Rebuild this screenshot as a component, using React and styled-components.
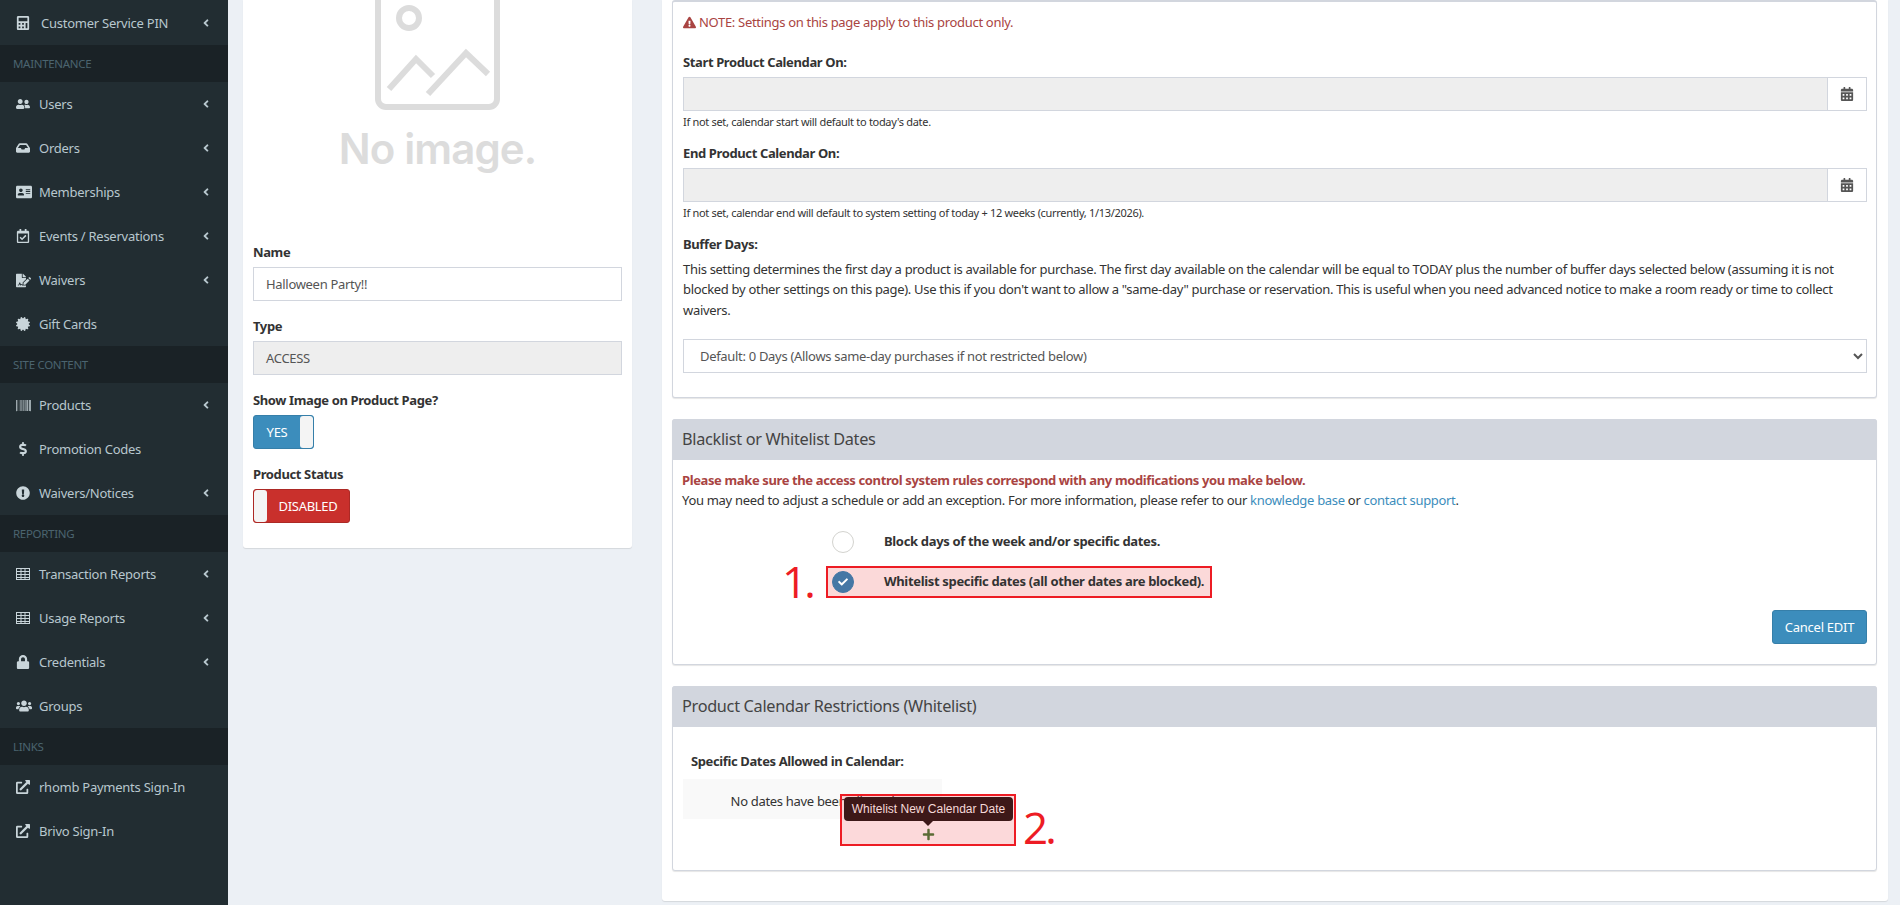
import React from "react";
import styled, { createGlobalStyle } from "styled-components";
import {
  FaCalculator, FaAngleLeft, FaUserFriends, FaInbox, FaAddressCard, FaRegCalendarCheck,
  FaFileSignature, FaCertificate, FaBarcode, FaDollarSign, FaExclamationCircle,
  FaLock, FaUsers, FaExternalLinkAlt, FaCalendarAlt, FaExclamationTriangle, FaPlus, FaCheck,
} from "react-icons/fa";

const FONT = `"Noto Sans", "Open Sans", sans-serif`;

const GlobalStyle = createGlobalStyle`
  html, body { margin: 0; padding: 0; height: 100%; overflow: hidden; }
  body {
    background: #ecf0f5;
    color: #333;
    font-family: ${FONT};
    font-size: 13px;
    letter-spacing: -0.31px;
  }
  * { box-sizing: border-box; }
`;

const Shell = styled.div`
  display: flex;
  height: 905px;
  overflow: hidden;
`;

const Sidebar = styled.nav`
  flex: 0 0 228px;
  background: #222d32;
  color: #b8c7ce;
`;

const SectionTitle = styled.div`
  height: 37px;
  background: #1a2226;
  color: #4b646f;
  font-size: 11.5px;
  line-height: 37px;
  padding-left: 13px;
`;

const NavRow = styled.div`
  display: flex;
  align-items: center;
  height: ${(p) => (p.$tall ? 45 : 44)}px;
  padding: 0 16px 0 16px;
`;

const NavIcon = styled.span`
  flex: 0 0 23px;
  display: flex;
  font-size: ${(p) => p.$size || 14}px;
  color: #c9d5da;
`;

const NavLabel = styled.span`
  flex: 1;
  white-space: nowrap;
  letter-spacing: -0.25px;
  padding-left: ${(p) => p.$indent || 0}px;
`;

const Main = styled.main`
  flex: 1;
  display: flex;
  align-items: flex-start;
  gap: 30px;
  padding: 0 12px 0 15px;
`;

const LeftCard = styled.section`
  flex: 0 0 389px;
  height: 548px;
  background: #fff;
  border-radius: 0 0 3px 3px;
  box-shadow: 0 1px 1px rgba(0, 0, 0, 0.1);
  padding: 0 10px;
`;

const Placeholder = styled.div`
  display: flex;
  flex-direction: column;
  align-items: center;
  height: 242px;
`;

const NoImage = styled.div`
  font-family: Inter, sans-serif;
  font-weight: 600;
  font-size: 42px;
  letter-spacing: -0.9px;
  line-height: 50px;
  color: #dcdcdc;
  margin-top: 12px;
`;

const FieldLabel = styled.label`
  display: block;
  font-weight: 700;
  letter-spacing: -0.38px;
  line-height: 20px;
  margin-bottom: 5px;
`;

const TextBox = styled.div`
  height: 34px;
  border: 1px solid #d2d6de;
  background: ${(p) => (p.$disabled ? "#eee" : "#fff")};
  color: #555;
  line-height: 32px;
  padding: 0 12px;
  margin-bottom: 15px;
`;

const Toggle = styled.div`
  display: flex;
  width: ${(p) => p.$w}px;
  height: 34px;
  border-radius: 3px;
  overflow: hidden;
  color: #fff;
  background: ${(p) => p.$bg};
  border: 1px solid ${(p) => p.$edge};
  margin-bottom: 15px;
`;

const ToggleText = styled.span`
  flex: 1;
  text-align: center;
  line-height: 32px;
`;

const ToggleKnob = styled.span`
  flex: 0 0 13px;
  background: #f4f4f4;
  border-radius: 3px;
`;

const RightCard = styled.section`
  flex: 1;
  height: 901px;
  background: #fff;
  border-radius: 0 0 3px 3px;
  box-shadow: 0 1px 1px rgba(0, 0, 0, 0.1);
  padding: 0 11px 0 10px;
`;

const Panel = styled.div`
  background: #fff;
  border: 1px solid #d2d6de;
  border-top-width: ${(p) => (p.$flat ? 2 : 1)}px;
  border-radius: 3px;
  box-shadow: 0 1px 1px rgba(0, 0, 0, 0.1);
  margin-bottom: 21px;
`;

const PanelHead = styled.h3`
  margin: -1px -1px 0;
  height: 41px;
  background: #d2d6de;
  color: #444;
  font-size: 16.3px;
  font-weight: 400;
  line-height: 41px;
  padding: 0 10px;
  border-radius: 3px 3px 0 0;
`;

const PanelBody = styled.div`
  position: relative;
  padding: ${(p) => p.$pad || "10px 9px 10px"};
`;

const Note = styled.div`
  color: #a94442;
  line-height: 20px;
  margin-bottom: 20px;
  display: flex;
  align-items: center;
  gap: 3px;
`;

const Group = styled.div`
  margin-bottom: 14px;
`;

const InputGroup = styled.div`
  display: flex;
  height: 34px;
  border: 1px solid #d2d6de;
`;

const ReadOnly = styled.div`
  flex: 1;
  background: #eee;
`;

const Addon = styled.div`
  flex: 0 0 39px;
  display: flex;
  align-items: center;
  justify-content: center;
  border-left: 1px solid #d2d6de;
  color: #555;
  font-size: 14px;
`;

const Help = styled.div`
  font-size: 11px;
  line-height: 15px;
  margin-top: 3px;
`;

const Para = styled.p`
  margin: 0 0 19px;
  line-height: 20.4px;
`;

const NativeSelect = styled.select`
  display: block;
  width: 100%;
  height: 34px;
  border: 1px solid #d2d6de;
  border-radius: 0;
  background: #fff;
  color: #555;
  font-family: ${FONT};
  font-size: 13px;
  letter-spacing: -0.31px;
  padding: 0 0 0 12px;
  margin-bottom: 24px;
`;

const Warn = styled.div`
  color: #a94442;
  font-weight: 700;
  letter-spacing: -0.38px;
  line-height: 20px;
`;

const Line = styled.div`
  line-height: 20px;
`;

const Link = styled.a`
  color: #3c8dbc;
`;

const RadioRow = styled.div`
  position: relative;
  display: flex;
  align-items: center;
  width: 386px;
  height: 32px;
  margin: ${(p) => p.$top}px 0 0 144px;
  padding-left: 4px;
  border: 2px solid ${(p) => (p.$marked ? "#ed1c24" : "transparent")};
  background: ${(p) => (p.$marked ? "#fbd9d9" : "transparent")};
`;

const Radio = styled.span`
  flex: 0 0 22px;
  height: 22px;
  border-radius: 50%;
  display: flex;
  align-items: center;
  justify-content: center;
  color: #fff;
  font-size: 10px;
  border: 1px solid ${(p) => (p.$on ? "#4577a5" : "#d3d3cf")};
  background: ${(p) => (p.$on ? "#4577a5" : "#fff")};
`;

const RadioLabel = styled.span`
  font-weight: 700;
  letter-spacing: -0.33px;
  margin: 0 0 3px 30px;
  white-space: nowrap;
`;

const Scribble = styled.span`
  position: absolute;
  left: ${(p) => p.$left}px;
  top: ${(p) => p.$top}px;
  color: #ed1c24;
  font-family: "Open Sans", sans-serif;
  font-size: 44px;
  font-weight: 400;
  line-height: 46px;
  letter-spacing: -3px;
  white-space: nowrap;
`;

const Actions = styled.div`
  display: flex;
  justify-content: flex-end;
  margin-top: 12px;
  padding-bottom: 10px;
`;

const Button = styled.button`
  width: 95px;
  height: 34px;
  background: #3c8dbc;
  border: 1px solid #367fa9;
  border-radius: 3px;
  color: #fff;
  font-family: ${FONT};
  font-size: 13px;
  letter-spacing: -0.25px;
`;

const SubLabel = styled.div`
  font-weight: 700;
  letter-spacing: -0.38px;
  line-height: 20px;
  padding-left: 8px;
  margin-bottom: 8px;
`;

const EmptyRow = styled.div`
  width: 259px;
  height: 40px;
  background: #f9f9f9;
  line-height: 44px;
  text-align: center;
  margin-bottom: 51px;
`;

const Callout = styled.div`
  position: absolute;
  left: 167px;
  top: 67px;
  width: 176px;
  height: 52px;
  border: 2px solid #ed1c24;
  background: rgba(237, 28, 36, 0.17);
  display: flex;
  align-items: flex-end;
  justify-content: center;
  color: #5b6b35;
  font-size: 13px;
  padding-bottom: 3px;
`;

const Tooltip = styled.div`
  position: absolute;
  left: 2px;
  top: 1px;
  width: 169px;
  height: 24px;
  background: #3d1818;
  border-radius: 4px;
  color: #f5d9d9;
  font-family: "Liberation Sans", Arial, sans-serif;
  font-size: 12px;
  letter-spacing: 0;
  line-height: 24px;
  text-align: center;
  &::after {
    content: "";
    position: absolute;
    left: 79px;
    top: 24px;
    border: 5px solid transparent;
    border-top-color: #3d1818;
    border-bottom: 0;
  }
`;

function GridIcon() {
  return (
    <svg width="14" height="12" viewBox="0 0 14 12" fill="none" stroke="currentColor" strokeWidth="1">
      <rect x="0.5" y="0.5" width="13" height="11" />
      <path d="M0 3.5H14M0 6.5H14M0 9.5H14M5 1V12M9 1V12" />
    </svg>
  );
}

const nav = [
  { label: "Customer Service PIN", icon: FaCalculator, caret: true, tall: true, indent: 2 },
  { section: "MAINTENANCE" },
  { label: "Users", icon: FaUserFriends, caret: true },
  { label: "Orders", icon: FaInbox, caret: true },
  { label: "Memberships", icon: FaAddressCard, caret: true, size: 16 },
  { label: "Events / Reservations", icon: FaRegCalendarCheck, caret: true },
  { label: "Waivers", icon: FaFileSignature, caret: true, size: 15 },
  { label: "Gift Cards", icon: FaCertificate },
  { section: "SITE CONTENT" },
  { label: "Products", icon: FaBarcode, caret: true, size: 15 },
  { label: "Promotion Codes", icon: FaDollarSign },
  { label: "Waivers/Notices", icon: FaExclamationCircle, caret: true },
  { section: "REPORTING" },
  { label: "Transaction Reports", icon: GridIcon, caret: true },
  { label: "Usage Reports", icon: GridIcon, caret: true },
  { label: "Credentials", icon: FaLock, caret: true },
  { label: "Groups", icon: FaUsers, size: 16 },
  { section: "LINKS" },
  { label: "rhomb Payments Sign-In", icon: FaExternalLinkAlt },
  { label: "Brivo Sign-In", icon: FaExternalLinkAlt },
];

function PlaceholderArt() {
  return (
    <svg width="125" height="112" viewBox="0 0 125 112" fill="none" stroke="#dcdcdc" strokeWidth="6">
      <rect x="3" y="-50" width="119" height="157" rx="8" />
      <circle cx="34" cy="18" r="10" />
      <path d="M14 89 L41 59 L58 76" />
      <path d="M53 94 L91 53 L113 74" />
    </svg>
  );
}

function CalendarField() {
  return (
    <InputGroup>
      <ReadOnly />
      <Addon>
        <FaCalendarAlt />
      </Addon>
    </InputGroup>
  );
}

export default function App() {
  return (
    <Shell>
      <GlobalStyle />
      <Sidebar>
        {nav.map((item) =>
          item.section ? (
            <SectionTitle key={item.section}>{item.section}</SectionTitle>
          ) : (
            <NavRow key={item.label} $tall={item.tall}>
              <NavIcon $size={item.size}>
                <item.icon />
              </NavIcon>
              <NavLabel $indent={item.indent}>{item.label}</NavLabel>
              {item.caret && <FaAngleLeft size={12} />}
            </NavRow>
          )
        )}
      </Sidebar>
      <Main>
        <LeftCard>
          <Placeholder>
            <PlaceholderArt />
            <NoImage>No image.</NoImage>
          </Placeholder>
          <FieldLabel>Name</FieldLabel>
          <TextBox>Halloween Party!!</TextBox>
          <FieldLabel>Type</FieldLabel>
          <TextBox $disabled>ACCESS</TextBox>
          <FieldLabel>Show Image on Product Page?</FieldLabel>
          <Toggle $w={61} $bg="#3c8dbc" $edge="#367fa9">
            <ToggleText>YES</ToggleText>
            <ToggleKnob />
          </Toggle>
          <FieldLabel>Product Status</FieldLabel>
          <Toggle $w={97} $bg="#c9302c" $edge="#ac2925">
            <ToggleKnob />
            <ToggleText>DISABLED</ToggleText>
          </Toggle>
        </LeftCard>
        <RightCard>
          <Panel $flat>
            <PanelBody $pad="10px 9px 0 10px">
              <Note>
                <FaExclamationTriangle size={13} />
                NOTE: Settings on this page apply to this product only.
              </Note>
              <Group>
                <FieldLabel>Start Product Calendar On:</FieldLabel>
                <CalendarField />
                <Help>If not set, calendar start will default to today's date.</Help>
              </Group>
              <Group>
                <FieldLabel>End Product Calendar On:</FieldLabel>
                <CalendarField />
                <Help>If not set, calendar end will default to system setting of today + 12 weeks (currently, 1/13/2026).</Help>
              </Group>
              <FieldLabel>Buffer Days:</FieldLabel>
              <Para>
                This setting determines the first day a product is available for purchase. The first day available on the calendar will be equal to TODAY plus the number of buffer days selected below (assuming it is not blocked by other settings on this page). Use this if you don't want to allow a "same-day" purchase or reservation. This is useful when you need advanced notice to make a room ready or time to collect waivers.
              </Para>
              <NativeSelect defaultValue="0">
                <option value="0">Default: 0 Days (Allows same-day purchases if not restricted below)</option>
              </NativeSelect>
            </PanelBody>
          </Panel>
          <Panel>
            <PanelHead>Blacklist or Whitelist Dates</PanelHead>
            <PanelBody>
              <Warn>Please make sure the access control system rules correspond with any modifications you make below.</Warn>
              <Line>
                You may need to adjust a schedule or add an exception. For more information, please refer to our <Link>knowledge base</Link> or <Link>contact support</Link>.
              </Line>
              <RadioRow $top={16}>
                <Radio />
                <RadioLabel>Block days of the week and/or specific dates.</RadioLabel>
              </RadioRow>
              <RadioRow $top={8} $marked>
                <Radio $on>
                  <FaCheck />
                </Radio>
                <RadioLabel>Whitelist specific dates (all other dates are blocked).</RadioLabel>
                <Scribble $left={-46} $top={-10}>1.</Scribble>
              </RadioRow>
              <Actions>
                <Button>Cancel EDIT</Button>
              </Actions>
            </PanelBody>
          </Panel>
          <Panel>
            <PanelHead>Product Calendar Restrictions (Whitelist)</PanelHead>
            <PanelBody $pad="24px 9px 0 10px">
              <SubLabel>Specific Dates Allowed in Calendar:</SubLabel>
              <EmptyRow>No dates have been allowed</EmptyRow>
              <Callout>
                <Tooltip>Whitelist New Calendar Date</Tooltip>
                <FaPlus />
                <Scribble $left={181} $top={8}>2.</Scribble>
              </Callout>
            </PanelBody>
          </Panel>
        </RightCard>
      </Main>
    </Shell>
  );
}
